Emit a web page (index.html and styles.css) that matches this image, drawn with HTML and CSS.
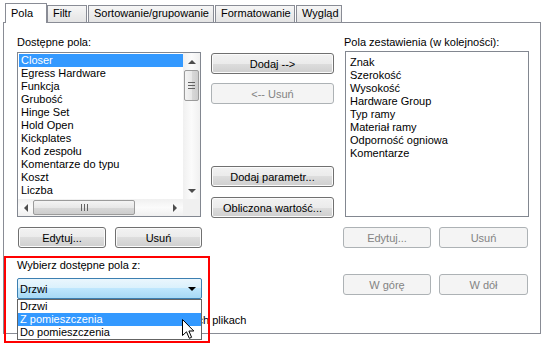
FILE: index.html
```html
<!DOCTYPE html>
<html lang="pl">
  <head>
    <meta charset="utf-8">
    <title>Właściwości zestawienia</title>
    <link rel="stylesheet" href="styles.css">
  </head>
  <body>
    <div class="dialog">
      <div class="tabs">
        <div class="tab tab-active tab-pola">Pola</div>
        <div class="tab tab-filtr">Filtr</div>
        <div class="tab tab-sort">Sortowanie/grupowanie</div>
        <div class="tab tab-format">Formatowanie</div>
        <div class="tab tab-wyglad">Wygląd</div>
      </div>

      <div class="panel">
        <!-- available fields -->
        <div class="col col-left">
          <div class="label">Dostępne pola:</div>
          <div class="listbox">
            <ul class="items">
              <li class="selected">Closer</li>
              <li>Egress Hardware</li>
              <li>Funkcja</li>
              <li>Grubość</li>
              <li>Hinge Set</li>
              <li>Hold Open</li>
              <li>Kickplates</li>
              <li>Kod zespołu</li>
              <li>Komentarze do typu</li>
              <li>Koszt</li>
              <li>Liczba</li>
            </ul>
            <div class="vscroll">
              <span class="arrow arrow-up"></span>
              <span class="vthumb"><span class="grip-h"></span></span>
              <span class="arrow arrow-down"></span>
            </div>
            <div class="hscroll">
              <span class="arrow arrow-left"></span>
              <span class="hthumb"><span class="grip-v"></span></span>
              <span class="arrow arrow-right"></span>
            </div>
            <div class="corner"></div>
          </div>
          <div class="btn-row btn-row-left">
            <button class="btn btn-edit">Edytuj...</button>
            <button class="btn btn-del">Usuń</button>
          </div>
          <div class="label label-source">Wybierz dostępne pola z:</div>
          <div class="combo">
            <div class="combo-box">
              <span>Drzwi</span>
              <span class="combo-arrow"></span>
            </div>
            <ul class="combo-popup">
              <li>Drzwi</li>
              <li class="selected">Z pomieszczenia</li>
              <li>Do pomieszczenia</li>
            </ul>
          </div>
          <div class="check">
            <span class="checkbox"></span>
            <span>Uwzględnij elementy w połączonych plikach</span>
          </div>
        </div>

        <!-- add / remove -->
        <div class="col col-mid">
          <button class="btn btn-wide">Dodaj --&gt;</button>
          <button class="btn btn-wide btn-disabled btn-remove" disabled>&lt;-- Usuń</button>
          <button class="btn btn-wide btn-param">Dodaj parametr...</button>
          <button class="btn btn-wide btn-calc">Obliczona wartość...</button>
        </div>

        <!-- scheduled fields -->
        <div class="col col-right">
          <div class="label label-right">Pola zestawienia (w kolejności):</div>
          <div class="listbox listbox-right">
            <ul class="items">
              <li>Znak</li>
              <li>Szerokość</li>
              <li>Wysokość</li>
              <li>Hardware Group</li>
              <li>Typ ramy</li>
              <li>Materiał ramy</li>
              <li>Odporność ogniowa</li>
              <li>Komentarze</li>
            </ul>
          </div>
          <div class="btn-row btn-row-right">
            <button class="btn btn-disabled btn-edit" disabled>Edytuj...</button>
            <button class="btn btn-disabled btn-del-right" disabled>Usuń</button>
          </div>
          <div class="btn-row btn-row-move">
            <button class="btn btn-disabled btn-edit" disabled>W górę</button>
            <button class="btn btn-disabled btn-del-right" disabled>W dół</button>
          </div>
        </div>
      </div>

      <div class="highlight-box"></div>
      <svg class="cursor" width="13" height="21" viewBox="0 0 13 21">
        <path d="M0.5 0.5 L0.5 16.5 L4.5 12.8 L7.3 19.3 L9.6 18.3 L6.9 12 L11.8 12 Z" fill="#fff" stroke="#000" stroke-width="1" stroke-linejoin="miter"/>
      </svg>
    </div>
  </body>
</html>
```

FILE: styles.css
```css
body {
  margin: 0;
  padding: 0;
  background: #fff;
  font-family: "Liberation Sans", Arial, sans-serif;
  font-size: 11px;
  color: #000;
}

ul {
  margin: 0;
  padding: 0;
  list-style: none;
}

.dialog {
  position: relative;
  width: 545px;
  height: 344px;
  overflow: hidden;
}

/* Tabs */
.tabs {
  display: flex;
  align-items: flex-end;
  height: 22px;
  padding-left: 5px;
}

.tab {
  box-sizing: border-box;
  height: 17px;
  line-height: 15px;
  padding-left: 5px;
  border: 1px solid #898c95;
  border-bottom: none;
  background: linear-gradient(#f6f6f6, #e4e4e4);
  margin-right: 1px;
  white-space: nowrap;
}

.tab-active {
  height: 20px;
  line-height: 18px;
  background: #fff;
  margin-bottom: -1px;
  margin-right: 0;
  position: relative;
  z-index: 1;
}

.tab-pola { width: 42px; }
.tab-filtr { width: 40px; }
.tab-sort { width: 126px; }
.tab-format { width: 80px; }
.tab-wyglad { width: 46px; }

/* Panel */
.panel {
  box-sizing: border-box;
  margin-left: 3px;
  width: 538px;
  height: 312px;
  border: 1px solid #898c95;
  display: flex;
  gap: 9px;
  padding: 13px 0 0 13px;
}

.col {
  display: flex;
  flex-direction: column;
}

.col-left { width: 185px; }
.col-mid { width: 123px; padding-top: 17px; }
.col-right { width: 185px; }

.label {
  line-height: 13px;
  height: 13px;
  white-space: nowrap;
}

.label-right { padding-left: 1px; }

/* List boxes */
.listbox {
  box-sizing: border-box;
  width: 184px;
  height: 165px;
  margin-top: 3px;
  border: 1px solid #828790;
  background: #fff;
  display: grid;
  grid-template-columns: 1fr 17px;
  grid-template-rows: 1fr 17px;
}

.listbox-right {
  margin: 2px 0 0 2px;
  height: 166px;
  display: block;
  padding: 3px 0 0 1px;
}

.items {
  padding: 1px 0 0 1px;
  overflow: hidden;
}

.items li {
  height: 13px;
  line-height: 13px;
  padding-left: 2px;
  white-space: nowrap;
}

.items li.selected,
.combo-popup li.selected {
  background: #3399ff;
  color: #fff;
}

/* Scrollbars */
.vscroll {
  display: flex;
  flex-direction: column;
  align-items: center;
  background: linear-gradient(90deg, #f0f0f0, #fbfbfb 50%, #f0f0f0);
}

.hscroll {
  display: flex;
  align-items: center;
  background: linear-gradient(#f0f0f0, #fbfbfb 50%, #f0f0f0);
}

.corner {
  background: #f0f0f0;
}

.arrow {
  width: 0;
  height: 0;
  flex: none;
}

.arrow-up {
  margin: 7px 0 6px;
  border-left: 4px solid transparent;
  border-right: 4px solid transparent;
  border-bottom: 4px solid #4d4d4d;
}

.arrow-down {
  margin: auto 0 6px;
  border-left: 4px solid transparent;
  border-right: 4px solid transparent;
  border-top: 4px solid #4d4d4d;
}

.arrow-left {
  margin: 0 6px 0 6px;
  border-top: 4px solid transparent;
  border-bottom: 4px solid transparent;
  border-right: 4px solid #4d4d4d;
}

.arrow-right {
  margin: 0 6px 0 auto;
  border-top: 4px solid transparent;
  border-bottom: 4px solid transparent;
  border-left: 4px solid #4d4d4d;
}

.vthumb {
  box-sizing: border-box;
  width: 15px;
  height: 31px;
  border: 1px solid #9b9b9b;
  border-radius: 2px;
  background: linear-gradient(90deg, #f4f4f4, #e8e8e8 50%, #d9d9d9 50%, #cdcdcd);
  display: flex;
  align-items: center;
  justify-content: center;
}

.hthumb {
  box-sizing: border-box;
  width: 102px;
  height: 15px;
  margin-left: -1px;
  border: 1px solid #9b9b9b;
  border-radius: 2px;
  background: linear-gradient(#f4f4f4, #e8e8e8 50%, #d9d9d9 50%, #cdcdcd);
  display: flex;
  align-items: center;
  justify-content: center;
}

.grip-h {
  width: 7px;
  height: 7px;
  background: repeating-linear-gradient(#636363 0 1px, transparent 1px 3px);
}

.grip-v {
  width: 7px;
  height: 7px;
  background: repeating-linear-gradient(90deg, #636363 0 1px, transparent 1px 3px);
}

/* Buttons */
.btn {
  box-sizing: border-box;
  height: 21px;
  padding: 0;
  font: inherit;
  color: #000;
  border: 1px solid #707070;
  border-radius: 3px;
  background: linear-gradient(#f2f2f2, #ebebeb 50%, #dddddd 50%, #cfcfcf);
  box-shadow: inset 0 0 0 1px #fbfbfb;
  white-space: nowrap;
}

.btn-disabled {
  color: #838383;
  border-color: #adb2b5;
  background: #f4f4f4;
  box-shadow: none;
}

.btn-wide { width: 123px; }
.btn-remove { margin-top: 9px; }
.btn-param { margin-top: 62px; }
.btn-calc { margin-top: 10px; }

.btn-row {
  display: flex;
  margin-top: 10px;
}

.btn-row-left {
  gap: 9px;
  padding-left: 1px;
}

.btn-row-right {
  gap: 8px;
}

.btn-row-move {
  gap: 8px;
  margin-top: 26px;
}

.btn-edit { width: 88px; }
.btn-del { width: 87px; }
.btn-del-right { width: 89px; }

/* Source combo */
.label-source { margin-top: 11px; }

.combo {
  position: relative;
  margin-top: 6px;
}

.combo-box {
  box-sizing: border-box;
  width: 185px;
  height: 21px;
  border: 1px solid #3c7fb1;
  border-radius: 2px;
  background: linear-gradient(#eaf6fd, #d9f0fc 50%, #bee6fd 50%, #a7d9f5);
  display: flex;
  align-items: center;
  padding: 0 5px 0 2px;
}

.combo-arrow {
  margin-left: auto;
  border-left: 4px solid transparent;
  border-right: 4px solid transparent;
  border-top: 4px solid #000;
}

.combo-popup {
  position: absolute;
  top: 100%;
  left: 0;
  width: 185px;
  box-sizing: border-box;
  border: 1px solid #646464;
  background: #fff;
  z-index: 2;
}

.combo-popup li {
  height: 13px;
  line-height: 13px;
  padding-left: 2px;
}

.check {
  display: flex;
  align-items: center;
  gap: 14px;
  margin-top: 14px;
  height: 13px;
  white-space: nowrap;
}

.checkbox {
  width: 11px;
  height: 11px;
  border: 1px solid #8f8f8f;
  background: #f4f4f4;
}

/* Annotation overlay */
.highlight-box {
  position: absolute;
  left: 4px;
  top: 256px;
  width: 206px;
  height: 87px;
  box-sizing: border-box;
  border: 2px solid #f00;
  z-index: 3;
}

.cursor {
  position: absolute;
  left: 182px;
  top: 319px;
  z-index: 4;
}
```
